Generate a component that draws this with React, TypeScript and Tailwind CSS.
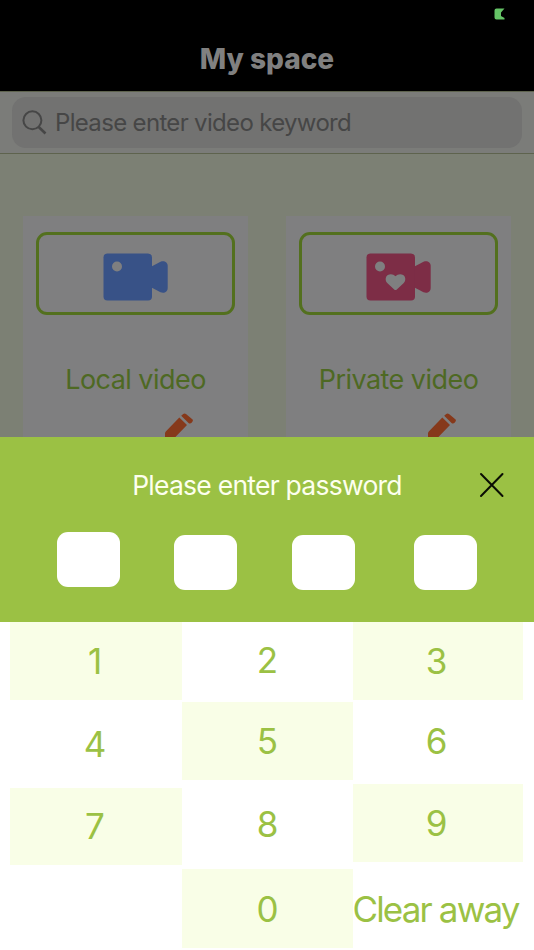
type Key = {
  label: string;
  className: string;
};

// each column keeps its own vertical rhythm
const keyColumns: { className: string; keys: Key[] }[] = [
  {
    className: "w-[172px]",
    keys: [
      { label: "1", className: "h-[78px] pt-px pr-[2px] bg-[#f9fee7]" },
      { label: "4", className: "mt-[5px] h-[78px] pt-px pr-[2px]" },
      { label: "7", className: "mt-[5px] h-[77px] pr-[2px] bg-[#f9fee7]" },
    ],
  },
  {
    className: "w-[171px]",
    keys: [
      { label: "2", className: "h-[76px]" },
      { label: "5", className: "mt-[4px] h-[78px] bg-[#f9fee7]" },
      { label: "8", className: "mt-[5px] h-[78px]" },
      { label: "0", className: "mt-[6px] h-[79px] pt-[2px] bg-[#f9fee7]" },
    ],
  },
  {
    className: "w-[170px]",
    keys: [
      { label: "3", className: "h-[78px] pt-px pr-[3px] bg-[#f9fee7]" },
      { label: "6", className: "mt-[2px] h-[78px] pr-[3px]" },
      { label: "9", className: "mt-[4px] h-[78px] pt-px pr-[3px] bg-[#f9fee7]" },
      { label: "Clear away", className: "mt-[8px] h-[78px] pr-[5px] tracking-[-1.85px]" },
    ],
  },
];

const CameraIcon = ({ className, heart }: { className: string; heart?: boolean }) => (
  <svg className={className} width="66" height="48" viewBox="0 0 66 48">
    <rect x="0.5" y="0.5" width="48.5" height="47" rx="4" fill="currentColor" />
    <path
      d="M48.5 13.5 L57.5 8.7 C61 7.3 64.7 9 64.7 13 V35 C64.7 39 61 40.7 57.5 39.3 L48.5 34.5 Z"
      fill="currentColor"
    />
    <circle cx="14" cy="13.5" r="5" fill="#7f7f80" />
    {heart && (
      <path
        d="M28.2 36.4 L21.5 30.3 C18.8 27.8 19.3 23.6 21.8 22 C24.5 20.4 27.6 21.2 29.5 23.3 C31.4 21.2 34.5 20.4 37.2 22 C39.7 23.6 40.2 27.8 37.5 30.3 L30.8 36.4 Q29.5 37.5 28.2 36.4 Z"
        fill="#7f7f80"
      />
    )}
  </svg>
);

const PencilIcon = () => (
  <svg className="shrink-0 text-[#86391b]" width="32" height="32" viewBox="0 0 32 32">
    <path
      d="M15.3 4.6 L23 12 L9 26.5 L1 29 V20.5 Q1 19.3 1.8 18.4 Z M17.2 2.8 L19.2 1 Q20.6 -0.2 22 1 L28.3 6.2 Q29.4 7.3 28.5 8.5 L27.6 9.7 Q26.3 11 24.8 10.2 Z"
      fill="currentColor"
    />
  </svg>
);

const VideoCard = ({ title, heart }: { title: string; heart?: boolean }) => (
  <section className="flex h-[221px] w-[225px] flex-col overflow-hidden bg-[#7f7f80] px-[13px] pt-4">
    <div className="flex h-[83px] w-[199px] shrink-0 items-center justify-center rounded-[11px] border-[3px] border-[#53701e] pt-1.5">
      <CameraIcon heart={heart} className={heart ? "text-[#7d2d46]" : "text-[#385287]"} />
    </div>
    <h2 className="mt-[47px] text-center text-[27px] leading-9 tracking-[-0.54px] whitespace-nowrap text-[#4e6923]">
      {title}
    </h2>
    <div className="mt-[15px] flex justify-end pr-[39px]">
      <PencilIcon />
    </div>
  </section>
);

const SearchBar = () => (
  <div className="h-[63px] border-y border-[#5e634e] bg-[#7b7c79] px-3 pt-[5px]">
    <div className="flex h-[51px] items-center rounded-[14px] bg-[#727271] pl-2.5">
      <svg width="25" height="25" viewBox="0 0 25 25" fill="none" stroke="#464646" strokeWidth="2">
        <circle cx="10.4" cy="10.3" r="9" />
        <path d="M16.7 17 L23.5 23.5" strokeWidth="2.6" />
      </svg>
      <span className="ml-2 pt-px text-[24px] tracking-[-0.67px] whitespace-nowrap text-[#464646]">
        Please enter video keyword
      </span>
    </div>
  </div>
);

const PasswordPanel = () => (
  <section className="h-[185px] bg-[#9bc144]">
    <header className="flex items-center pt-[30px]">
      <h2 className="ml-[130px] w-[274px] text-center text-[26.5px] leading-9 tracking-[-0.75px] whitespace-nowrap text-[#fdffee]">
        Please enter password
      </h2>
      <svg className="mb-px ml-[75px]" width="26" height="26" viewBox="0 0 26 26" fill="none">
        <path d="M2 2 L23.5 24 M23.5 2 L2 24" stroke="#0b0e04" strokeWidth="2" strokeLinecap="round" />
      </svg>
    </header>
    <div className="flex pt-[29px] pl-[57px]">
      <span className="h-[55px] w-[63px] rounded-[11px] bg-white" />
      <span className="mt-[3px] ml-[54px] h-[55px] w-[63px] rounded-[11px] bg-white" />
      <span className="mt-[3px] ml-[55px] h-[55px] w-[63px] rounded-[11px] bg-white" />
      <span className="mt-[3px] ml-[59px] h-[55px] w-[63px] rounded-[11px] bg-white" />
    </div>
  </section>
);

const Keypad = () => (
  <main className="flex h-[328px] bg-white px-2.5 text-[35px] text-[#9bc144]">
    {keyColumns.map((column, index) => (
      <div key={index} className={`flex flex-col ${column.className}`}>
        {column.keys.map((key) => (
          <button
            key={key.label}
            className={`flex shrink-0 items-center justify-center leading-none whitespace-nowrap ${key.className}`}
          >
            {key.label}
          </button>
        ))}
      </div>
    ))}
  </main>
);

const App = () => {
  return (
    <div className="h-[950px] w-[534px] overflow-hidden bg-white font-['Inter','Liberation_Sans',sans-serif]">
      <header className="h-[91px] bg-black">
        <div className="flex h-7 items-center justify-end pr-[29px]">
          <svg width="11" height="12" viewBox="0 0 11 12">
            <path d="M2.5 0.5 H10.5 L7 4.5 V8 L10.5 10 V11.5 H2.5 Q0.5 11.5 0.5 9.5 V2.5 Q0.5 0.5 2.5 0.5 Z" fill="#65c466" />
          </svg>
        </div>
        <h1 className="mt-[13px] text-center text-[28px] leading-9 font-extrabold text-[#808080]">
          My space
        </h1>
      </header>
      <SearchBar />
      <div className="flex h-[283px] gap-[38px] bg-[#7c8074] pt-[62px] pl-[23px]">
        <VideoCard title="Local video" />
        <VideoCard title="Private video" heart />
      </div>
      <PasswordPanel />
      <Keypad />
    </div>
  );
};

export default App;
